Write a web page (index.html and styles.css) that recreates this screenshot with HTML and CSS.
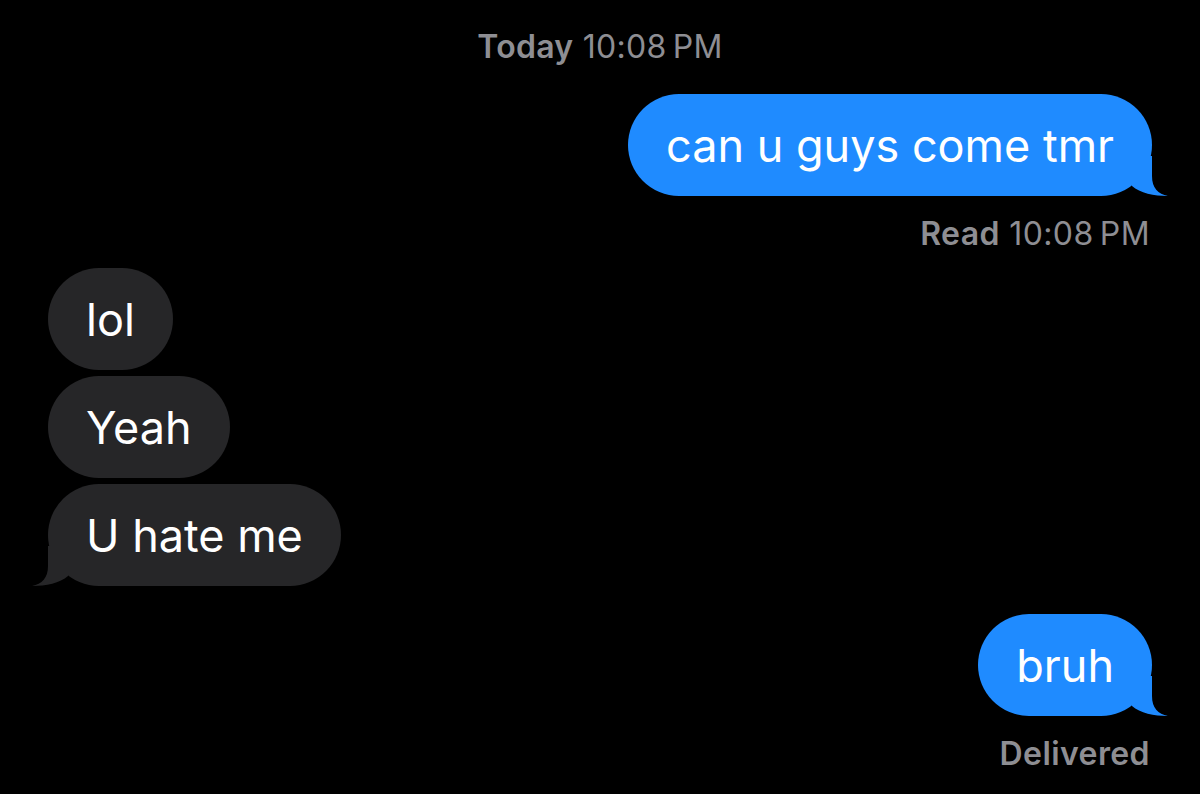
FILE: index.html
```html
<!DOCTYPE html>
<html>
<head>
<meta charset="utf-8">
<link rel="stylesheet" href="styles.css">
</head>
<body>
<main class="thread">
  <div class="stamp"><span class="stamp-day">Today</span> 10:08&#8239;PM</div>
  <div class="row row-sent">
    <div class="bubble sent">can u guys come tmr<svg class="tail tail-right" viewBox="0 0 40 40" aria-hidden="true"><path d="M24 0 L24 20 C24 32 30 38 40 40 C26 40 12 37 4 30 L4 0 Z"/></svg></div>
  </div>
  <div class="status status-read"><span class="status-strong">Read</span> 10:08&#8239;PM</div>
  <div class="row row-recv first-recv">
    <div class="bubble recv">lol</div>
  </div>
  <div class="row row-recv gap-small">
    <div class="bubble recv">Yeah</div>
  </div>
  <div class="row row-recv gap-small">
    <div class="bubble recv">U hate me<svg class="tail tail-left" viewBox="0 0 40 40" aria-hidden="true"><path d="M24 0 L24 20 C24 32 30 38 40 40 C26 40 12 37 4 30 L4 0 Z"/></svg></div>
  </div>
  <div class="row row-sent later">
    <div class="bubble sent">bruh<svg class="tail tail-right" viewBox="0 0 40 40" aria-hidden="true"><path d="M24 0 L24 20 C24 32 30 38 40 40 C26 40 12 37 4 30 L4 0 Z"/></svg></div>
  </div>
  <div class="status status-delivered"><span class="status-strong">Delivered</span></div>
</main>
</body>
</html>
```
FILE: styles.css
```css
html, body {
  margin: 0;
  padding: 0;
  background: #000;
  height: 100%;
}
body {
  font-family: Inter, "Open Sans", "Liberation Sans", sans-serif;
  color: #fff;
  overflow: hidden;
}
.thread {
  display: flex;
  flex-direction: column;
  padding: 28px 48px 0 48px;
}
.stamp {
  text-align: center;
  color: #8e8e93;
  font-size: 32px;
  line-height: 38px;
  letter-spacing: 0.3px;
}
.stamp-day { font-weight: 600; }
.row { display: flex; }
.row-sent { justify-content: flex-end; margin-top: 28px; }
.row-recv { justify-content: flex-start; }
.first-recv { margin-top: 15px; }
.gap-small { margin-top: 6px; }
.later { margin-top: 28px; }
.bubble {
  position: relative;
  font-size: 45px;
  line-height: 51px;
  padding: 25.5px 38px;
  border-radius: 52px;
}
.sent { background: #1f8bff; color: #fff; }
.recv { background: #262628; color: #fff; }
.tail {
  position: absolute;
  bottom: 0;
  width: 40px;
  height: 40px;
  display: block;
}
.sent .tail { fill: #1f8bff; }
.recv .tail { fill: #262628; }
.tail-right { right: -16px; }
.tail-left { left: -16px; transform: scaleX(-1); }
.status {
  align-self: flex-end;
  color: #8e8e93;
  font-size: 32px;
  line-height: 38px;
  margin-right: 2px;
  letter-spacing: 0.4px;
}
.status-read { margin-top: 19px; }
.status-delivered { margin-top: 19px; }
.status-strong { font-weight: 600; }
```
